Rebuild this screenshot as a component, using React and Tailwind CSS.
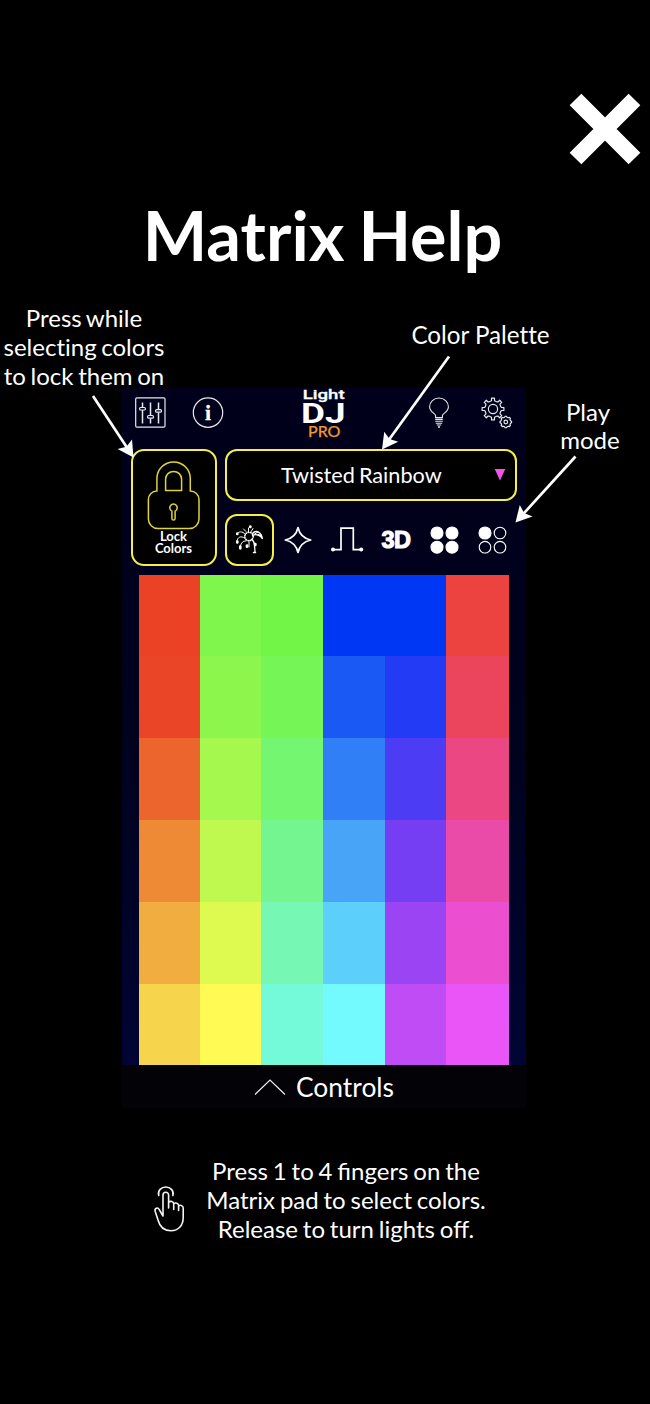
import React from "react";

const COLORS = [
  ["#eb4226", "#7ef64c", "#73f547", "#0037f5", "#0037f5", "#ec4340"],
  ["#eb4527", "#8cf64d", "#75f556", "#1b59f5", "#243bf5", "#ea455d"],
  ["#eb652c", "#a4f84e", "#75f670", "#307ff6", "#4c3cf4", "#ea4783"],
  ["#ee8936", "#bff94f", "#74f58f", "#47a4f7", "#753ef3", "#ea4ba8"],
  ["#f2ad40", "#defa51", "#76f8b4", "#5dcffb", "#9b44f3", "#eb4fcf"],
  ["#f6d44b", "#fffb54", "#74fad8", "#73faff", "#c04cf6", "#ea55f8"],
];

function gearPath(cx, cy, teeth, outer, inner) {
  const pts = [];
  const step = (Math.PI * 2) / teeth;
  for (let i = 0; i < teeth; i++) {
    const a = i * step - Math.PI / 2;
    [[-0.32, inner], [-0.22, inner + 0.4], [-0.17, outer], [0.17, outer], [0.22, inner + 0.4], [0.32, inner]].forEach(([f, r]) => {
      pts.push(`${(cx + Math.cos(a + f * step) * r).toFixed(2)} ${(cy + Math.sin(a + f * step) * r).toFixed(2)}`);
    });
  }
  return `M${pts.join("L")}Z`;
}

const SlidersIcon = () => (
  <svg className="h-8 w-8" viewBox="0 0 32 32" fill="none" stroke="#e8e8ee" strokeWidth="1.2">
    <rect x="1.7" y="1.9" width="29.3" height="29.3" rx="1.2" />
    <path d="M8.5 6.5v5M8.5 14V27.5M16.5 6.5v13M16.5 22.5v5M24.5 6.5v7M24.5 16.5v11" strokeWidth="1.5" />
    <rect x="5.6" y="11.5" width="5.8" height="2.5" rx="1" />
    <rect x="13.6" y="19.5" width="5.8" height="2.7" rx="1" />
    <rect x="21.6" y="13.7" width="5.8" height="2.5" rx="1" />
  </svg>
);

const InfoIcon = () => (
  <svg className="h-8 w-8" viewBox="0 0 32 32" fill="none" stroke="#e8e8ee">
    <circle cx="16" cy="16.6" r="14.7" strokeWidth="1.2" />
    <text x="16" y="23.6" textAnchor="middle" fill="#fff" strokeWidth=".5" stroke="#fff" fontSize="20" fontWeight="700" className="font-['Liberation_Serif',serif]">i</text>
  </svg>
);

const Logo = () => (
  <svg className="h-[52px] w-12" viewBox="300 388 48 52" fill="#fff">
    <text x="302.7" y="399.3" fontSize="13.5" fontWeight="500" stroke="#fff" strokeWidth=".3" textLength="42" lengthAdjust="spacingAndGlyphs" className="font-[Roboto,sans-serif]">Light</text>
    <text x="301" y="423" fontSize="28" fontWeight="700" textLength="44.5" lengthAdjust="spacingAndGlyphs" className="font-[Roboto,sans-serif]">DJ</text>
    <text x="308" y="437" fontSize="14.5" fill="#f79a2c" stroke="#f79a2c" strokeWidth=".25" textLength="32.5" lengthAdjust="spacingAndGlyphs" className="font-[Lato,sans-serif]">PRO</text>
  </svg>
);

const BulbIcon = () => (
  <svg className="h-8 w-6" viewBox="427 397 24 32" fill="none" stroke="#e8e8ee" strokeWidth="1.1">
    <path d="M435.6 417.6V415.5C435.4 413.2 429.6 412.2 429.6 406.8a9.4 8.8 0 0 1 18.8 0C448.4 412.2 442.6 413.2 442.4 415.5V417.6Z" />
    <path d="M435.2 419.4h7.6M435.2 421.3h7.6M435.8 423.2h6.4M436.8 425h4.4" />
    <path d="M438 427h2" strokeWidth="1.4" />
  </svg>
);

const GearsIcon = () => (
  <svg className="h-8 w-8" viewBox="481 397 32 32" fill="none" stroke="#e8e8ee" strokeWidth="1.2" strokeLinejoin="round">
    <path d={gearPath(493, 409, 8, 11, 8.2)} />
    <circle cx="493" cy="409" r="4.6" />
    <path d={gearPath(505.8, 422, 8, 5.8, 4.9)} />
    <circle cx="505.8" cy="422" r="1.8" />
  </svg>
);

const LockIcon = () => (
  <svg className="h-[70px] w-[54px]" viewBox="147.1 459.9 54 70" fill="none" stroke="#dfd33a" strokeWidth="1.5">
    <path d="M157 491v-12.5a16.7 16.7 0 0 1 33.4 0V491a8.5 8.5 0 0 1 8.7 8.5V519a9.5 9.5 0 0 1-9.5 9.5H158a9.5 9.5 0 0 1-9.5-9.5V499.5a8.5 8.5 0 0 1 8.5-8.5Z" />
    <path d="M165.7 490.5v-11.5a8 7.7 0 0 1 16 0v11.5Z" />
    <path d="M172 511a3.7 3.7 0 1 1 3.2 0v7.3a1.6 1.6 0 0 1-3.2 0Z" />
  </svg>
);

const FireworkIcon = () => (
  <svg className="h-8 w-8" viewBox="234 524 32 32" fill="none" stroke="#fff" strokeLinecap="round">
    <path d="M245.500 534.500C242 530.500 238.500 531.500 237 534M244.500 538C241 535.500 237.500 537 237 541M246 541C243 540.500 241 543 240.500 546" strokeWidth="1" />
    <path d="M252.500 533.500C256 529.500 261.500 532 262.500 539C260.500 535.500 256.500 533.500 252.500 535.500M251.500 539.500C255 540.500 254.500 546 255 552" strokeWidth="1.3" />
    <path d="M248.500 531.500V528M251.200 531.500L253 528.500M246 531.500L243.500 529M249 541.500V547M254.500 534L258 532" strokeWidth="1" />
    <circle cx="249" cy="536.5" r="4.2" strokeDasharray=".6 1.7" strokeWidth="1.6" />
    <path d="M237.300 541.500v1M240.300 546.500v1.800M247 545.500v1.200M237.300 533.500v.5M250.300 526.500v.5M255.300 544v1" strokeWidth="2.7" />
    <path d="M253.500 552.500H255.500M258 534.500L261 536" strokeWidth="1.5" />
  </svg>
);

const SparkleIcon = () => (
  <svg className="h-8 w-8" viewBox="282.3 524 32 32" fill="none" stroke="#fff" strokeWidth="1.7" strokeLinejoin="round">
    <path d="M298.3 527.5C299.8 534.5 303.3 538.3 311 540C303.3 541.8 299.8 545.5 298.3 552.5C296.8 545.5 293.3 541.8 285.6 540C293.3 538.3 296.8 534.5 298.3 527.5Z" />
  </svg>
);

const PulseIcon = () => (
  <svg className="h-8 w-9" viewBox="329 524 36 32" fill="none" stroke="#fff" strokeWidth="1.7">
    <path d="M333 549.6H341V528.2H353.3V549.6H361" />
    <circle cx="333" cy="549.6" r="2" fill="#fff" stroke="none" />
    <circle cx="361.2" cy="549.6" r="2" fill="#fff" stroke="none" />
  </svg>
);

const Dots = ({ filled }) => (
  <svg className="h-8 w-8" viewBox="0 0 32 32" stroke="#fff" strokeWidth="1.1">
    {[[9, 9], [24, 9], [9, 23.2], [24, 23.2]].map(([x, y], i) => (
      <circle key={i} cx={x} cy={y} r={i < filled ? 6 : 5.8} fill={i < filled ? "#fff" : "none"} />
    ))}
  </svg>
);

const HandIcon = () => (
  <svg className="h-[50px] w-[34px]" viewBox="152 1184 34 50" fill="none" stroke="#f4f4f4" strokeWidth="1.6" strokeLinecap="round" strokeLinejoin="round">
    <path d="M158.700 1195.500C157.300 1190.500 161.500 1187 165.800 1187C170.100 1187 174.300 1190.500 172.900 1195.500" />
    <path d="M163 1216V1195a2.800 2.800 0 0 1 5.600 0V1208V1202.500C170.500 1200.500 173.700 1201.500 173.700 1204V1209.500V1203.800C175.500 1202.200 178.600 1203.200 178.600 1205.500V1210.500V1205.800C180.500 1204.600 183.200 1205.800 183.200 1208V1217.500C183.200 1226 178 1230.700 171 1230.700C163.500 1230.700 159.800 1227 158.200 1220.500L155.200 1211.500C154.200 1208 157.800 1206.800 159.200 1209.500Z" />
  </svg>
);

const Arrow = ({ x1, y1, x2, y2 }) => {
  const a = Math.atan2(y2 - y1, x2 - x1);
  const at = (back, side) =>
    `${x2 - Math.cos(a) * back - Math.sin(a) * side},${y2 - Math.sin(a) * back + Math.cos(a) * side}`;
  const [bx, by] = at(11, 0).split(",");
  return (
    <g>
      <line x1={x1} y1={y1} x2={bx} y2={by} stroke="#fff" strokeWidth="2.7" />
      <polygon points={`${x2},${y2} ${at(15.8, 8.6)} ${at(12.8, 0)} ${at(15.8, -8.6)}`} fill="#fff" />
    </g>
  );
};

export default function App() {
  return (
    <main className="relative flex h-[1404px] w-[650px] flex-col overflow-hidden bg-black font-[Lato,sans-serif] text-white">
      <header className="flex h-[189px] shrink-0 justify-end pt-[92.5px] pr-[9.5px]">
        <button aria-label="Close" className="h-[72px] w-[72px]">
          <svg className="h-[72px] w-[72px]" viewBox="0 0 72 72" stroke="#fff" strokeWidth="16.6">
            <path d="M6.5 6.5L65.500 65.500M65.500 6.5L6.5 65.500" />
          </svg>
        </button>
      </header>

      <h1 className="h-[115px] shrink-0 pr-[5px] text-center text-[68.3px] leading-[92px] font-bold whitespace-nowrap [word-spacing:-2.5px]">Matrix Help</h1>

      <div className="flex h-[84px] shrink-0 items-start text-center text-[24px] leading-[28.8px] whitespace-nowrap">
        <p className="w-[168px] shrink-0 [font-variant-ligatures:none] [word-spacing:-1.5px]">Press while<br />selecting colors<br />to lock them on</p>
        <p className="ml-[232px] w-[161px] shrink-0 pt-[17px] text-[24.2px] [font-variant-ligatures:none]">Color Palette</p>
      </div>

      <div className="flex h-[720px] shrink-0 pl-[122px]">
        <section className="flex w-[404px] shrink-0 flex-col bg-linear-to-b from-[#00001a] via-[#00021e] to-[#000536]">
          <nav className="flex h-[61px] shrink-0 pl-3">
            <div className="mt-2 flex w-[166px] shrink-0 gap-[26px]">
              <SlidersIcon />
              <InfoIcon />
            </div>
            <Logo />
            <div className="mt-[9px] ml-[79px] flex gap-[30px]">
              <BulbIcon />
              <GearsIcon />
            </div>
          </nav>

          <div className="flex h-[126px] shrink-0 gap-2 pl-[9px]">
            <button className="flex h-[117px] w-[86px] flex-col items-center rounded-[13px] border-[2.5px] border-[#f5ef4a] bg-black pt-[9px]">
              <LockIcon />
              <span className="mt-px -ml-px text-[13px] leading-[11.5px] font-bold">Lock<br />Colors</span>
            </button>
            <div className="flex w-[292px] flex-col gap-[13px]">
              <button className="flex h-[52px] items-center justify-between rounded-[12px] border-[2.5px] border-[#f5ef4a] bg-black pr-[9px] pl-[54px] text-[21.7px] whitespace-nowrap">
                <span className="[word-spacing:-1.5px]">Twisted Rainbow</span>
                <svg className="h-3 w-3" viewBox="0 0 12 12"><path d="M.7 0h10.6L6 11.5Z" fill="#f055e8" /></svg>
              </button>
              <div className="flex h-[52px] items-center">
                <button className="flex h-[52px] w-[49px] items-center justify-center rounded-[12px] border-[2.5px] border-[#f5ef4a] bg-black">
                  <FireworkIcon />
                </button>
                <div className="flex w-[48px] justify-center"><SparkleIcon /></div>
                <div className="flex w-[50px] justify-center"><PulseIcon /></div>
                <div className="flex w-[48px] justify-center pt-0.5 font-['Liberation_Sans',sans-serif] text-[23.5px] font-bold tracking-[-0.5px] [-webkit-text-stroke:1.1px_white]">3D</div>
                <div className="flex w-[48px] justify-center"><Dots filled={4} /></div>
                <div className="flex w-[48px] justify-center"><Dots filled={1} /></div>
              </div>
            </div>
          </div>

          <div className="ml-[17px] grid h-[490px] w-[369.5px] shrink-0 grid-cols-[61px_61px_62px_62px_61px_62.5px] grid-rows-[81px_82px_82px_82px_82px_81px]">
            {COLORS.flat().map((color, i) => (
              <div key={i} style={{ backgroundColor: color }} />
            ))}
          </div>

          <button className="flex h-[43px] items-center justify-center gap-[10px] bg-[#020207] text-[26.4px] leading-none whitespace-nowrap">
            <svg className="h-[18px] w-8" viewBox="0 0 32 18" fill="none" stroke="#f0f0f0" strokeWidth="1.2">
              <path d="M1 16.5L16 2L31 16.5" />
            </svg>
            <span className="pt-0.5">Controls</span>
          </button>
        </section>
        <p className="ml-[4px] w-[120px] pt-[10px] text-center text-[24px] leading-[28.4px]"><span className="pr-1">Play</span><br />mode</p>
      </div>

      <footer className="flex items-start pt-[49px] pl-[152px]">
        <div className="pt-[26.5px]"><HandIcon /></div>
        <p className="ml-[9.5px] w-[301px] text-center text-[24px] leading-[28.8px] whitespace-nowrap [word-spacing:-1.3px]">
          Press 1 to 4 fingers on the<br />Matrix pad to select colors.<br />Release to turn lights off.
        </p>
      </footer>

      <svg className="pointer-events-none absolute inset-0 h-full w-full" viewBox="0 0 650 1404">
        <Arrow x1={93} y1={396} x2={133.5} y2={457.5} />
        <Arrow x1={449} y1={356.5} x2={382} y2={449.5} />
        <Arrow x1={575.5} y1={456.5} x2={515.5} y2={522.5} />
      </svg>
    </main>
  );
}
